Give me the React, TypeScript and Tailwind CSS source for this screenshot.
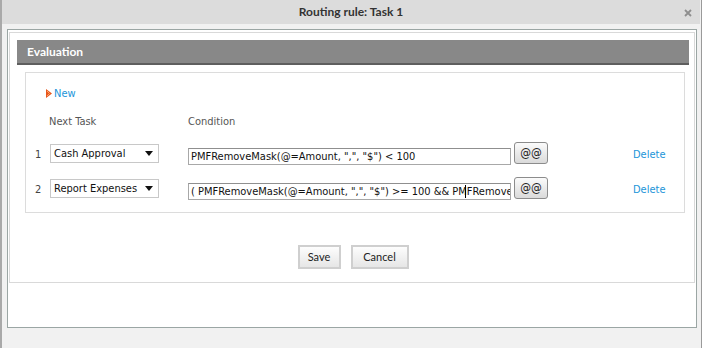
import React from "react";

const body = { fontFamily: '"DejaVu Sans Condensed", "Liberation Sans", sans-serif' };
const ui = { fontFamily: 'Lato, "Open Sans", sans-serif' };

function NewIcon() {
  return (
    <svg width="6" height="9" viewBox="0 0 6 9" className="block">
      <path d="M0 0 L6 4.5 L0 9 Z" fill="#e8561c" />
      <path d="M1 2 L3.5 4.5 L1 7" fill="none" stroke="#f9a36a" strokeWidth="1" />
    </svg>
  );
}

function Select({ label }: { label: string }) {
  return (
    <div className="mt-[2px] w-[109px] h-[19px] border border-[#c8c8c8] bg-white flex items-center justify-between pl-[3px] pr-[5px] text-[11px] text-[#111]" style={body}>
      <span className="leading-none">{label}</span>
      <svg width="8" height="5" viewBox="0 0 8 5" className="block">
        <path d="M0 0 H8 L4 5 Z" fill="#111" />
      </svg>
    </div>
  );
}

function AtButton() {
  return (
    <div className="w-[34px] h-[22px] rounded-[3px] border border-[#8c8c8c] bg-gradient-to-b from-[#fbfbfb] to-[#dadada] flex items-center justify-center text-[12px] text-[#222] leading-none" style={body}>
      @@
    </div>
  );
}

function Row({ n, task, cond, caret }: { n: string; task: string; cond: string; caret?: boolean }) {
  return (
    <div className="flex items-start h-[22px]">
      <div className="w-[24px] pl-[9px] mt-[6px] text-[11px] leading-[13px] text-[#444]" style={body}>{n}</div>
      <Select label={task} />
      <div className="ml-[29px] mt-[6px] w-[323px] h-[17px] relative">
        <input
          readOnly
          value={cond}
          className="block w-full h-full border border-[#a8a8a8] border-t-[#8f8f8f] bg-white pl-[2px] text-[11px] leading-[15px] text-[#111] outline-none"
          style={body}
        />
        {caret && <span className="absolute top-[2px] left-[277px] w-px h-[13px] bg-black" />}
      </div>
      <div className="ml-[3px]">
        <AtButton />
      </div>
      <div className="ml-[85px] mt-[6px] text-[11px] leading-[13px] text-[#1b95d9]" style={body}>Delete</div>
    </div>
  );
}

export default function App() {
  return (
    <div className="w-[702px] h-[348px] bg-[#f1f1f1] flex overflow-hidden">
      <div className="w-[2px] h-full bg-[#a9a9a9]" />
      <div className="flex-1 flex flex-col">
        <div className="h-[24px] bg-[#dcdcdc] relative flex items-center justify-center">
          <span className="text-[12px] font-bold text-[#333]" style={ui}>Routing rule: Task 1</span>
          <svg width="8" height="8" viewBox="0 0 8 8" className="absolute right-[8px] top-[9px]">
            <path d="M1 1 L7 7 M7 1 L1 7" stroke="#8e8e8e" strokeWidth="1.8" />
          </svg>
        </div>
        <div className="pl-[5px] pr-[3px] pt-[5px]">
          <div className="h-[299px] border border-[#9ba6a4] bg-white pt-[2px] px-[1px]">
            <div className="border border-[#d9d9d9] pt-[7px] pl-[7px] pr-[5px] pb-[13px] flex flex-col">
              <div className="h-[25px] bg-[#888888] border-b-2 border-[#5e5e5e] flex items-center pl-[10px]">
                <span className="text-[12px] font-bold text-white" style={ui}>Evaluation</span>
              </div>
              <div className="mt-[7px] ml-[8px] mr-[4px] h-[141px] border border-[#dcdcdc] flex flex-col pt-[13px]">
                <div className="flex items-center pl-[20px] h-[14px]">
                  <NewIcon />
                  <span className="ml-[2px] text-[11px] text-[#1b95d9] leading-none" style={body}>New</span>
                </div>
                <div className="flex mt-[15px] h-[14px] text-[11px] text-[#555] leading-[14px]" style={body}>
                  <span className="ml-[23px] w-[139px]">Next Task</span>
                  <span>Condition</span>
                </div>
                <div className="mt-[13px]">
                  <Row n="1" task="Cash Approval" cond={'PMFRemoveMask(@=Amount, ",", "$") < 100'} />
                </div>
                <div className="mt-[13px]">
                  <Row n="2" task="Report Expenses" caret cond={'( PMFRemoveMask(@=Amount, ",", "$") >= 100 && PMFRemoveMask(@=Amount, ",", "$") < 1000 )'} />
                </div>
              </div>
              <div className="mt-[32px] flex justify-center gap-[10px]">
                <div className="w-[43px] h-[24px] border-2 border-[#cfcfcf] bg-gradient-to-b from-[#fdfdfd] to-[#e6e6e6] flex items-center justify-center text-[11px] text-[#222]" style={ui}>Save</div>
                <div className="w-[58px] h-[24px] border-2 border-[#cfcfcf] bg-gradient-to-b from-[#fdfdfd] to-[#e6e6e6] flex items-center justify-center text-[11px] text-[#222]" style={ui}>Cancel</div>
              </div>
            </div>
          </div>
        </div>
      </div>
      <div className="w-[1px] h-full bg-[#f1f1f1]" />
      <div className="w-[1px] h-full bg-[#9a9a9a]" />
    </div>
  );
}
